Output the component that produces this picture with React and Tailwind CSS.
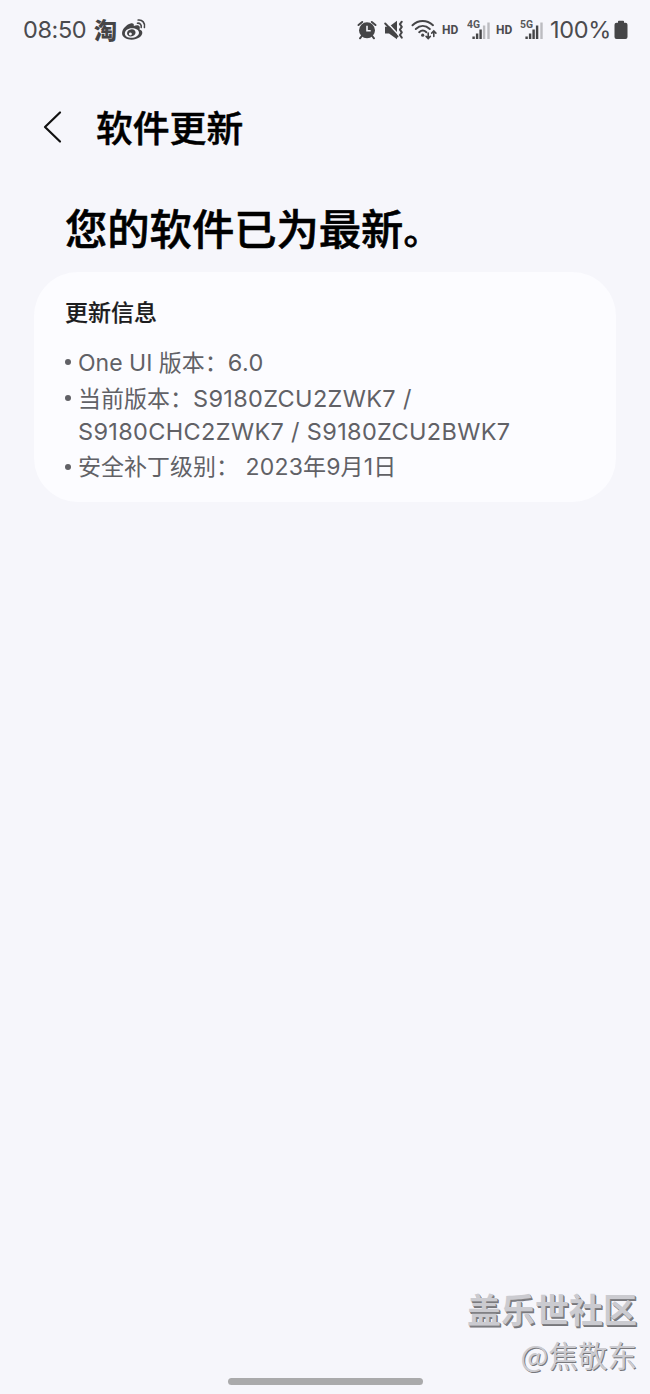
const LATIN = "font-['Inter','Noto_Sans_CJK_SC',sans-serif]";

const DETAILS = [
  [{ label: 'One UI 版本：', value: '6.0' }],
  [
    { label: '当前版本：', value: 'S9180ZCU2ZWK7 /' },
    { label: '', value: 'S9180CHC2ZWK7 / S9180ZCU2BWK7' },
  ],
  [{ label: '安全补丁级别：', value: ' 2023年9月1日', cls: 'text-[23px] tracking-[0.15px]' }],
];

function WeiboIcon() {
  return (
    <svg width="26" height="23" viewBox="0 0 25 22" fill="none">
      <path
        fill="#454547"
        fillRule="evenodd"
        d="M9.2 5.2C5.3 6.2 1 10.500 1 14.600c0 4 4.600 6.200 9.200 6.200 6 0 10.300-3.300 10.300-6.600 0-1.700-1.300-2.700-2.700-3.100.7-1.900.3-3.300-1-3.900-1.200-.5-2.900-.2-4.500.5.4-1.600-.3-3.100-3.100-2.500ZM10.400 9.800c4 0 6.900 1.700 6.900 4.300s-3.400 4.900-7.200 4.900-6.400-1.600-6.400-4.200 3-5 6.700-5Z"
      />
      <path
        fill="#454547"
        fillRule="evenodd"
        d="M10.300 10.800c-2.700.2-4.500 1.900-4.500 3.900 0 1.900 1.500 3 3.700 3 2.600 0 4.500-1.700 4.500-3.700 0-1.900-1.500-3.300-3.700-3.200Zm-1.200 3.100a1.400 1.400 0 1 1-.1 2.800 1.400 1.400 0 0 1 .1-2.800Z"
      />
      <path d="M15.800 4.900c2.400-.3 4.200 1.700 3.600 4.200M16.500 1.900c4-.5 7 2.800 6 7.200" stroke="#454547" strokeWidth="1.500" strokeLinecap="round" />
    </svg>
  );
}

function AlarmIcon() {
  return (
    <svg width="20" height="20" viewBox="0 0 20 20" fill="none">
      <circle cx="10" cy="10.300" r="8" fill="#454547" />
      <path d="M1.500 5 5.200 2M18.500 5l-3.700-3M4.800 16 3 18.300M15.200 16l1.800 2.300" stroke="#454547" strokeWidth="2" strokeLinecap="round" />
      <path d="M10 5.800v5h3.700" stroke="#f6f6fb" strokeWidth="1.600" />
    </svg>
  );
}

function MuteIcon() {
  return (
    <svg width="20" height="20" viewBox="0 0 20 20" fill="none">
      <path d="M1 6.800h4L13 .8v18.400l-8-5.700H1Z" fill="#454547" />
      <path d="M2.500 2 14.500 14.800" stroke="#f6f6fb" strokeWidth="1.500" />
      <path d="m1.200 3.500 12.300 13" stroke="#454547" strokeWidth="1.900" strokeLinecap="round" />
      <path d="m17.800 1.700-1.900 2.500 1.900 2.700-1.900 2.700 1.900 2.700-1.900 2.700 1.900 2.700" stroke="#454547" strokeWidth="2" strokeLinejoin="round" strokeLinecap="round" />
    </svg>
  );
}

function WifiIcon() {
  return (
    <svg width="27" height="21" viewBox="0 0 27 21" fill="none" stroke="#454547" strokeLinecap="round">
      <path d="M1.500 6.200c6-5.600 14.300-5.600 20.500 0M4.800 10c4.300-4 9.700-4 14 0M8.200 13.200c2.200-2 5-2 7.200 0" strokeWidth="2" />
      <circle cx="11.700" cy="16.200" r="1.600" fill="#454547" stroke="none" />
      <path d="M17.200 14v5.300m-2.100-1.900 2.100 2.100 2.100-2.100M22.800 17.500v-5.300m-2.100 1.900 2.100-2.100 2.100 2.100" strokeWidth="1.600" />
    </svg>
  );
}

function Signal({ label, bars }) {
  return (
    <svg width="24" height="22" viewBox="0 0 24 22">
      <text x="0" y="9" fontFamily="Roboto, sans-serif" fontSize="10.500" fontWeight="700" fill="#58585a" textLength="13" lengthAdjust="spacingAndGlyphs">
        {label}
      </text>
      {[[5.400, 2.500], [8.900, 5.500], [12.400, 9.500], [15.900, 13.500], [20.300, 16.500]].map(([x, h], i) => (
        <rect key={x} x={x} y={20 - h} width="2.400" height={h} fill={i < bars ? '#454547' : '#bcbcc0'} />
      ))}
    </svg>
  );
}

function StatusBar() {
  return (
    <div className="flex h-[59px] items-center pl-[23px] pr-[22px] text-[#4b4b4e]">
      <span className="w-[71px] text-[23.5px] leading-none tracking-[-0.4px]">08:50</span>
      <span className="w-[27px] font-['Noto_Sans_CJK_SC',sans-serif] text-[23px] leading-none font-black text-[#454547]">淘</span>
      <WeiboIcon />
      <div className="ml-auto flex items-center">
        <AlarmIcon />
        <span className="ml-[7px]"><MuteIcon /></span>
        <span className="ml-[7px]"><WifiIcon /></span>
        <span className="ml-[4px] w-[25px] font-['Roboto',sans-serif] text-[12px] font-bold">HD</span>
        <Signal label="4G" bars={3} />
        <span className="ml-[5px] w-[24px] font-['Roboto',sans-serif] text-[12px] font-bold">HD</span>
        <Signal label="5G" bars={4} />
        <span className="ml-[6px] w-[64px] text-[23.5px] leading-none tracking-[-0.3px]">100%</span>
        <svg width="14" height="20" viewBox="0 0 14 20" fill="#454547">
          <path d="M4 1.500Q4 .7 4.800.7h4.400q.8 0 .8.800v1.200h1.500q2 0 2 2V17q0 2-2 2h-9q-2 0-2-2V4.700q0-2 2-2H4Z" />
        </svg>
      </div>
    </div>
  );
}

export default function App() {
  return (
    <div className={`flex h-[1394px] w-[650px] flex-col overflow-hidden bg-[#f6f6fb] ${LATIN}`}>
      <StatusBar />

      <header className="mt-[42px] flex h-[56px] items-center pl-[43px]">
        <svg width="20" height="34" viewBox="0 0 20 34" fill="none" className="mb-[4px]">
          <path d="M17 2.500 2 17l15 14.500" stroke="#111" strokeWidth="2.200" strokeLinecap="round" strokeLinejoin="round" />
        </svg>
        <h1 className="ml-[33px] text-[36.800px] leading-none font-medium text-black [-webkit-text-stroke:0.5px_#000]">软件更新</h1>
      </header>

      <h2 className="mt-[43px] ml-[65px] h-[60px] text-[42.300px] leading-[60px] font-medium text-black [-webkit-text-stroke:0.6px_#000]">
        您的软件已为最新<span className="text-[37px]">。</span>
      </h2>

      <section className="mx-[34px] mt-[12px] h-[230px] rounded-[44px] bg-[#fcfcff] pt-[25px] pl-[31px]">
        <h3 className="h-[33px] text-[23px] leading-[33px] font-medium text-[#1c1c1e] [-webkit-text-stroke:0.2px_#1c1c1e]">更新信息</h3>
        <ul className="mt-[16px] space-y-[3px] text-[23px] leading-[33px] whitespace-pre text-[#616166]">
          {DETAILS.map((lines) => (
            <li key={lines[0].label} className="flex">
              <span className="mt-[13px] size-[6px] rounded-full bg-[#616166]" />
              <div className="ml-[7px]">
                {lines.map((line) => (
                  <p key={line.value} className="h-[33px]">
                    {line.label}
                    <span className={line.cls ?? 'text-[23.500px] tracking-[0.34px]'}>{line.value}</span>
                  </p>
                ))}
              </div>
            </li>
          ))}
        </ul>
      </section>

      <footer className="mt-auto flex flex-col items-end pr-[13px] font-['Noto_Sans_CJK_SC',sans-serif] text-[#cbcbd0] [text-shadow:1px_1px_0_#77777b]">
        <p className="h-[47px] text-[34px] leading-[47px] font-bold [text-shadow:1px_1px_0_#808084,1.5px_1.5px_0_#77777b]">盖乐世社区</p>
        <p className="h-[46px] text-[29.500px] leading-[44px]">@焦敬东</p>
      </footer>
      <div className="mb-[9px] h-[7px] w-[195px] shrink-0 self-center rounded-full bg-[#aaaaab]" />
    </div>
  );
}
